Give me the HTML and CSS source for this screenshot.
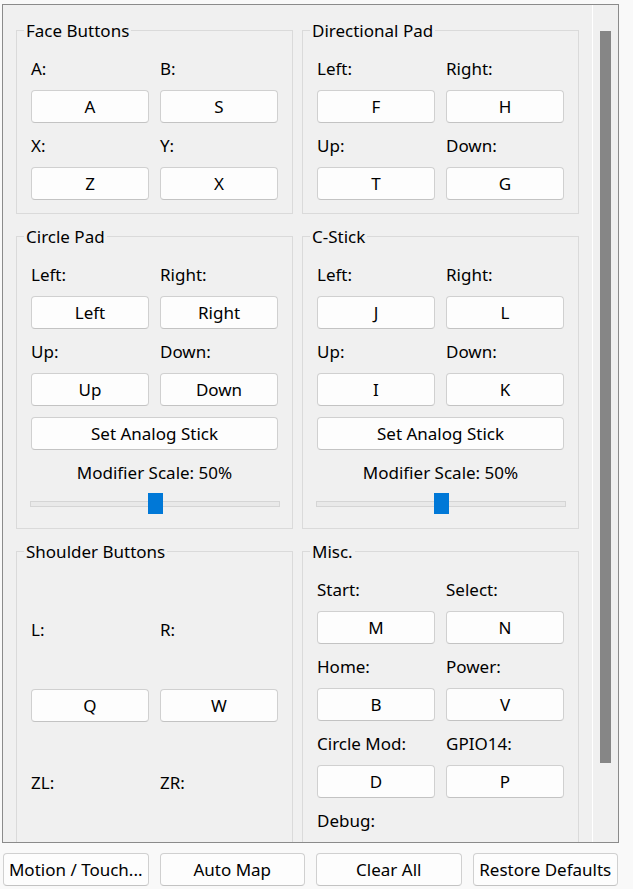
FILE: index.html
```html
<!DOCTYPE html>
<html>
<head>
<meta charset="utf-8">
<link rel="stylesheet" href="styles.css">
</head>
<body>
<div class="frame">
  <div class="content">
    <div class="grid">
      <fieldset class="group">
        <legend>Face Buttons</legend>
        <div class="body">
          <span class="lbl">A:</span><span class="lbl">B:</span>
          <button class="btn">A</button><button class="btn">S</button>
          <span class="lbl">X:</span><span class="lbl">Y:</span>
          <button class="btn">Z</button><button class="btn">X</button>
        </div>
      </fieldset>
      <fieldset class="group">
        <legend>Directional Pad</legend>
        <div class="body">
          <span class="lbl">Left:</span><span class="lbl">Right:</span>
          <button class="btn">F</button><button class="btn">H</button>
          <span class="lbl">Up:</span><span class="lbl">Down:</span>
          <button class="btn">T</button><button class="btn">G</button>
        </div>
      </fieldset>
      <fieldset class="group">
        <legend>Circle Pad</legend>
        <div class="body">
          <span class="lbl">Left:</span><span class="lbl">Right:</span>
          <button class="btn">Left</button><button class="btn">Right</button>
          <span class="lbl">Up:</span><span class="lbl">Down:</span>
          <button class="btn">Up</button><button class="btn">Down</button>
          <button class="btn wide">Set Analog Stick</button>
          <span class="lbl center">Modifier Scale: 50%</span>
          <div class="slider"><div class="handle"></div></div>
        </div>
      </fieldset>
      <fieldset class="group">
        <legend>C-Stick</legend>
        <div class="body">
          <span class="lbl">Left:</span><span class="lbl">Right:</span>
          <button class="btn">J</button><button class="btn">L</button>
          <span class="lbl">Up:</span><span class="lbl">Down:</span>
          <button class="btn">I</button><button class="btn">K</button>
          <button class="btn wide">Set Analog Stick</button>
          <span class="lbl center">Modifier Scale: 50%</span>
          <div class="slider"><div class="handle"></div></div>
        </div>
      </fieldset>
      <fieldset class="group">
        <legend>Shoulder Buttons</legend>
        <div class="body spread">
          <span class="lbl">L:</span><span class="lbl">R:</span>
          <button class="btn">Q</button><button class="btn">W</button>
          <span class="lbl">ZL:</span><span class="lbl">ZR:</span>
          <button class="btn" aria-label="ZL key"></button><button class="btn" aria-label="ZR key"></button>
        </div>
      </fieldset>
      <fieldset class="group">
        <legend>Misc.</legend>
        <div class="body">
          <span class="lbl">Start:</span><span class="lbl">Select:</span>
          <button class="btn">M</button><button class="btn">N</button>
          <span class="lbl">Home:</span><span class="lbl">Power:</span>
          <button class="btn">B</button><button class="btn">V</button>
          <span class="lbl">Circle Mod:</span><span class="lbl">GPIO14:</span>
          <button class="btn">D</button><button class="btn">P</button>
          <span class="lbl">Debug:</span><span class="lbl"></span>
          <button class="btn" aria-label="Debug key"></button><span></span>
        </div>
      </fieldset>
    </div>
  </div>
  <div class="vscroll"><div class="thumb"></div></div>
</div>
<div class="actions">
  <button class="btn action">Motion / Touch...</button>
  <button class="btn action">Auto Map</button>
  <button class="btn action">Clear All</button>
  <button class="btn action">Restore Defaults</button>
</div>
</body>
</html>
```

FILE: styles.css
```css
* { box-sizing: border-box; }

body {
  margin: 0;
  width: 633px;
  height: 889px;
  overflow: hidden;
  background: #f9f9f9;
  font-family: "Noto Sans", "Open Sans", sans-serif;
  font-size: 17px;
  color: #000;
}

.frame {
  margin: 4px 0 0 2px;
  width: 617px;
  height: 839px;
  border: 1px solid #8b8b8b;
  background: #f0f0f0;
  display: flex;
  overflow: hidden;
}

.content {
  flex: 1;
  min-width: 0;
  padding: 15px 0 0 13px;
  overflow: hidden;
}

.grid {
  display: grid;
  grid-template-columns: 277px 277px;
  column-gap: 9px;
  row-gap: 12px;
}

.group {
  margin: 0;
  padding: 0;
  min-width: 0;
  border: 1px solid #dadada;
}

.group legend {
  margin-left: 7px;
  padding: 0 2px;
  height: 20px;
  line-height: 22px;
}

.body {
  display: grid;
  grid-template-columns: 118px 118px;
  column-gap: 11px;
  row-gap: 11px;
  padding: 17px 14px 13px;
}

.body.spread {
  padding-top: 57px;
  row-gap: 49px;
}

.lbl {
  height: 22px;
  line-height: 24px;
  white-space: nowrap;
}

.lbl.center {
  grid-column: 1 / -1;
  text-align: center;
}

.btn {
  height: 33px;
  margin: 0;
  padding: 0;
  border: 1px solid #d0d0d0;
  border-bottom-color: #c3c3c3;
  border-radius: 4px;
  background: #fdfdfd;
  font: inherit;
  color: inherit;
  white-space: nowrap;
}

.btn.wide {
  grid-column: 1 / -1;
}

.slider {
  grid-column: 1 / -1;
  position: relative;
  height: 21px;
  margin: -1px -2px 1px -1px;
}

.slider::before {
  content: "";
  position: absolute;
  left: 0;
  right: 0;
  top: 8px;
  height: 4px;
  border: 1px solid #d5d5d5;
  background: #e9e9e9;
}

.handle {
  position: absolute;
  top: 0;
  left: calc(50% - 7px);
  width: 15px;
  height: 21px;
  background: #0078d7;
}

.vscroll {
  flex: none;
  width: 26px;
  border-left: 1px solid #ffffff;
  padding: 26px 7px 0;
}

.thumb {
  width: 11px;
  height: 732px;
  background: #868686;
}

.actions {
  display: flex;
  gap: 11px;
  padding: 10px 15px 0 3px;
}

.btn.action {
  flex: 1;
  min-width: 0;
}
```
